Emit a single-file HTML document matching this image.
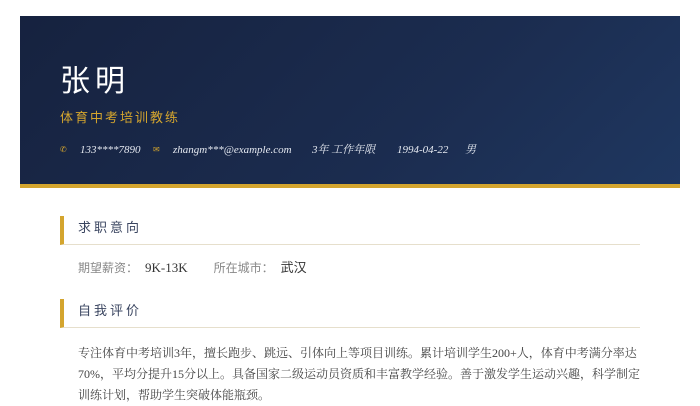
<!DOCTYPE html>
<html><head><meta charset="utf-8"><style>
body{margin:0;background:#fff;width:700px;height:400px;overflow:hidden;font-family:"Liberation Serif","Noto Serif CJK SC",serif}
.hd{position:absolute;left:20px;top:16px;width:660px;height:168px;background:linear-gradient(135deg,#16223f 0%,#1b2c4f 60%,#1f3760 100%);border-bottom:4px solid #d4a52e}
.name{position:absolute;left:40px;top:42px;font-family:"Noto Sans CJK SC",sans-serif;font-size:30px;color:#fff;letter-spacing:5px;line-height:40px}
.sub{position:absolute;left:40px;top:92px;font-family:"Noto Sans CJK SC",sans-serif;font-size:13px;color:#d4a52e;letter-spacing:2px;line-height:18px}
.ct{position:absolute;left:40px;top:126px;font-size:11px;color:#e4e8f0;font-style:italic;line-height:16px;white-space:nowrap}
.ct span{position:absolute;top:0}
.ic{color:#d4a52e;font-style:normal;font-size:8px}
.sec{position:absolute;left:60px;width:580px;height:29px;border-left:4px solid #d4a52e;border-bottom:1px solid #e6dfcc;box-sizing:border-box}
.sec div{position:absolute;left:14px;top:1px;font-family:"Noto Sans CJK SC",sans-serif;font-size:13px;color:#3a4560;letter-spacing:3px}
.row{position:absolute;left:78px;top:259px;font-size:12px;color:#888;line-height:18px;font-family:"Liberation Serif","Noto Sans CJK SC",serif}
.row b{font-weight:normal;color:#333;font-size:13px}
.p{position:absolute;left:78px;top:343px;width:566px;font-size:12px;color:#444;line-height:21px;font-family:"Liberation Serif","Noto Serif CJK SC",serif}
</style></head><body>
<div class="hd">
<div class="name">张明</div>
<div class="sub">体育中考培训教练</div>
<div class="ct"><span class="ic" style="left:0">✆</span><span style="left:20px">133****7890</span><span class="ic" style="left:93px">✉</span><span style="left:113px">zhangm***@example.com</span><span style="left:252px">3年 工作年限</span><span style="left:337px">1994-04-22</span><span style="left:405px">男</span></div>
</div>
<div class="sec" style="top:216px"><div>求职意向</div></div>
<div class="row">期望薪资：<span style="display:inline-block;width:7px"></span><b>9K-13K</b><span style="display:inline-block;width:26px"></span>所在城市：<span style="display:inline-block;width:7px"></span><b>武汉</b></div>
<div class="sec" style="top:299px"><div>自我评价</div></div>
<div class="p">专注体育中考培训3年，擅长跑步、跳远、引体向上等项目训练。累计培训学生200+人，体育中考满分率达70%，平均分提升15分以上。具备国家二级运动员资质和丰富教学经验。善于激发学生运动兴趣，科学制定训练计划，帮助学生突破体能瓶颈。</div>
</body></html>
